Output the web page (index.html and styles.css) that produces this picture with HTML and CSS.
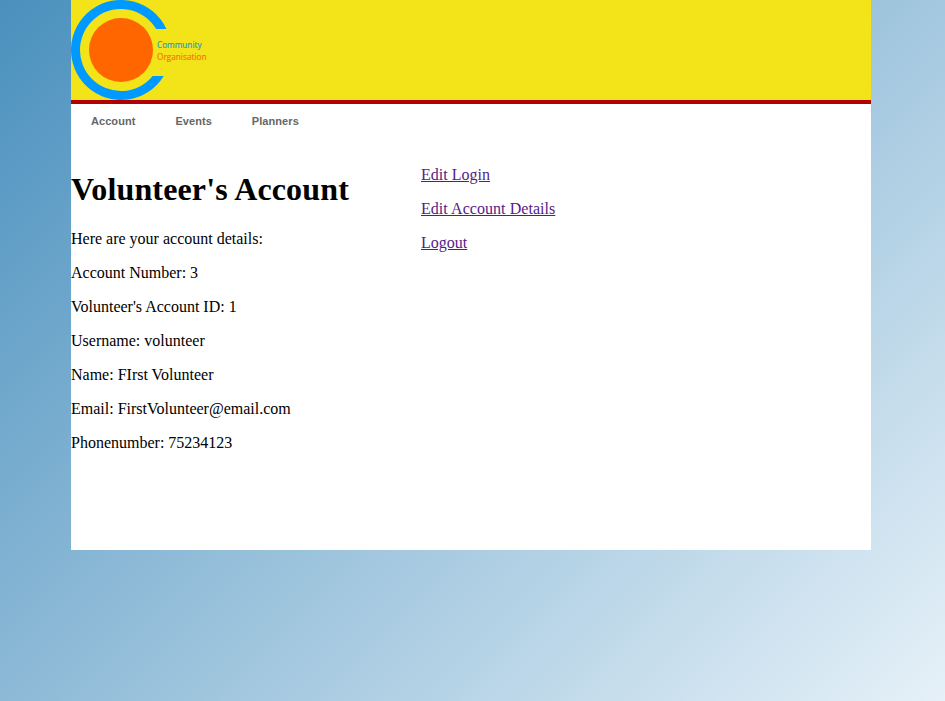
FILE: index.html
```html
<!DOCTYPE html>
<html lang="en">
<head>
<meta charset="utf-8">
<title>Volunteer's Account</title>
<link rel="stylesheet" href="styles.css">
</head>
<body>
<div class="page">
<header class="banner">
<svg class="logo" width="140" height="100" viewBox="0 0 140 100" role="img" aria-label="Community Organisation">
<path class="ring" d="M95.400 29A50 50 0 1 0 92.700 76H81.700A41 41 0 1 1 85.200 29Z"/>
<circle class="disc" cx="50" cy="50" r="32"/>
<text class="logo-text blue" x="86" y="48" textLength="44.500">Community</text>
<text class="logo-text orange" x="86" y="59.500" textLength="49.500">Organisation</text>
</svg>
</header>
<nav class="nav"><a>Account</a><a>Events</a><a>Planners</a></nav>
<main class="content">
<section class="details">
<h1>Volunteer's Account</h1>
<p>Here are your account details:</p>
<p>Account Number: 3</p>
<p>Volunteer's Account ID: 1</p>
<p>Username: volunteer</p>
<p>Name: FIrst Volunteer</p>
<p>Email: FirstVolunteer@email.com</p>
<p>Phonenumber: 75234123</p>
</section>
<section class="links">
<p><a href="#login">Edit Login</a></p>
<p><a class="wide" href="#details">Edit Account Details</a></p>
<p><a href="#logout">Logout</a></p>
</section>
</main>
</div>
</body>
</html>
```
FILE: styles.css
```css
html { height: 100%; }
body { margin: 0; height: 100%; overflow: hidden; font: 16px/18px "Liberation Serif", serif; color: #000; background: linear-gradient(135deg, #4a90be, #e6f1f8); }
.page { width: 800px; height: 550px; margin-left: 71px; background: #fff; }
.banner { height: 100px; background: #f3e419; border-bottom: 4px solid #b00000; }
.logo { display: block; }
.ring { fill: #0099ff; }
.disc { fill: #ff6600; }
.logo-text { font: 8.200px "Open Sans", sans-serif; stroke-width: .2px; }
.blue { fill: #1e9ccf; stroke: #1e9ccf; }
.orange { fill: #fb7510; stroke: #fb7510; }
.nav { display: flex; gap: 40px; padding: 11px 20px 0; height: 35px; font: bold 11px/13px "Liberation Sans", sans-serif; color: #666; letter-spacing: .06px; }
.content { display: flex; }
.details { width: 350px; }
h1 { margin: 21px 0 22px; font-size: 32px; line-height: 37px; letter-spacing: .14px; }
p { margin: 0 0 16px; }
.links { padding-top: 16px; }
.links a { color: #551a8b; }
.links .wide { letter-spacing: .05px; }
```
